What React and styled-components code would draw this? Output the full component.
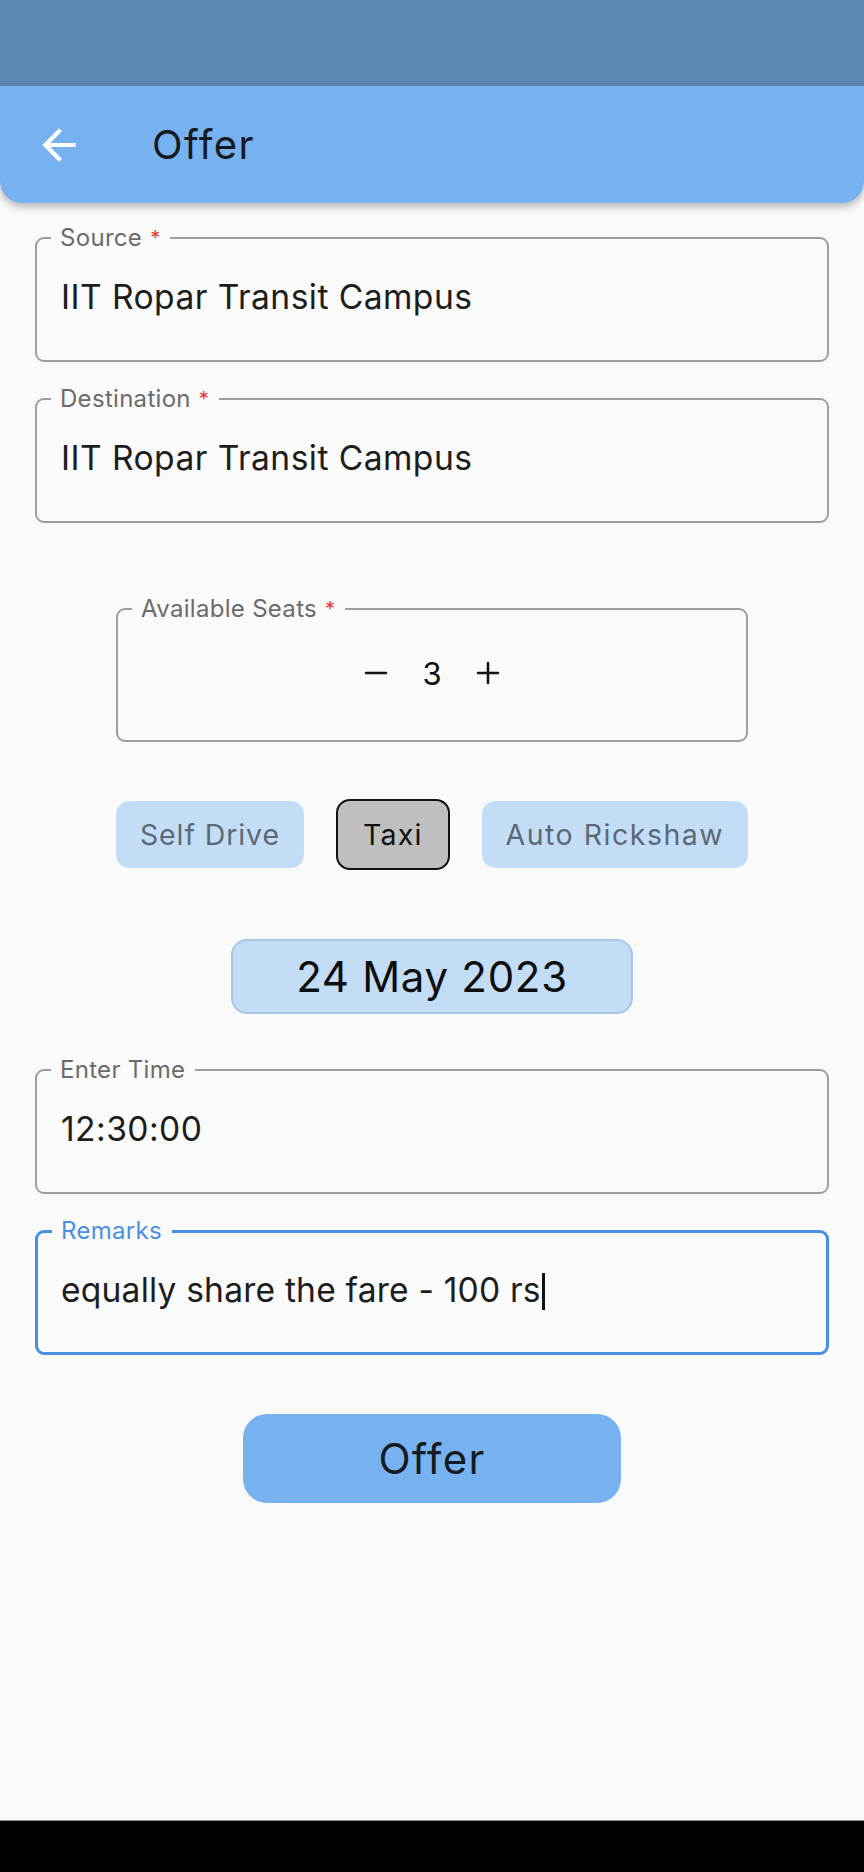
import React from "react";
import styled, { createGlobalStyle } from "styled-components";
import { Minus, Plus } from "lucide-react";

const GlobalStyle = createGlobalStyle`
  html, body {
    margin: 0;
    padding: 0;
    background: #fafafa;
  }
  body {
    font-family: "Inter", "Noto Sans", sans-serif;
    color: #1d1d1d;
  }
  * {
    box-sizing: border-box;
  }
`;

const Screen = styled.div`
  min-height: 1872px;
  display: flex;
  flex-direction: column;
  background: #fafafa;
`;

const StatusBar = styled.div`
  height: 86px;
  background: #5a87b3;
`;

const AppBar = styled.header`
  height: 117px;
  background: #77b2f0;
  border-radius: 0 0 22px 22px;
  box-shadow: 0 4px 8px rgba(0, 0, 0, 0.28);
  display: flex;
  align-items: center;
  padding-left: 34px;
  gap: 68px;
  position: relative;
  z-index: 1;
`;

const BackButton = styled.button`
  width: 50px;
  height: 50px;
  padding: 0;
  border: none;
  background: none;
  display: flex;
  align-items: center;
  justify-content: center;
`;

const Title = styled.h1`
  margin: 0;
  font-size: 40px;
  font-weight: 400;
  letter-spacing: 1.4px;
  color: #161b22;
`;

const Form = styled.main`
  flex: 1;
  display: flex;
  flex-direction: column;
  padding: 0 35px;
`;

const Field = styled.fieldset`
  margin: ${(p) => p.$mt}px ${(p) => (p.$narrow ? 81 : 0)}px 0;
  padding: ${(p) => p.$pt || 27}px ${(p) => (p.$focused ? 23 : 24)}px
    ${(p) => (p.$pb || 43) - (p.$focused ? 1 : 0)}px;
  border: ${(p) => (p.$focused ? "3px solid #4a90e2" : "2px solid #9e9e9e")};
  border-radius: 9px;
  min-width: 0;
`;

const Label = styled.legend`
  font-size: 24px;
  line-height: 24px;
  letter-spacing: 0.3px;
  padding: 0 10px 0 9px;
  margin-left: ${(p) => (p.$focused ? -9 : -10)}px;
  color: ${(p) => (p.$focused ? "#4a90e2" : "#6b6b6b")};
`;

const Required = styled.span`
  color: #e53935;
  font-size: 20px;
  margin-left: 8px;
  vertical-align: top;
`;

const Value = styled.div`
  font-size: 33.6px;
  line-height: 40px;
  letter-spacing: ${(p) => p.$spacing ?? 0.45}px;
  color: #1d1d1d;
  white-space: nowrap;
`;

const Caret = styled.span`
  display: inline-block;
  width: 3px;
  height: 37px;
  background: #111;
  vertical-align: -8px;
  margin-left: 1px;
`;

const Stepper = styled.div`
  display: flex;
  align-items: center;
  justify-content: center;
  gap: 29px;
  height: 40px;
  font-size: 31px;
  color: #111;
`;

const StepButton = styled.button`
  width: 34px;
  height: 34px;
  padding: 0;
  border: none;
  background: none;
  display: flex;
  align-items: center;
  justify-content: center;
  color: #111;
`;

const ChipRow = styled.div`
  margin-top: 57px;
  display: flex;
  justify-content: center;
  align-items: center;
  gap: 31px;
`;

const Chip = styled.button`
  height: ${(p) => (p.$active ? 71 : 69)}px;
  padding: 0 ${(p) => (p.$active ? 25 : 24)}px;
  border-radius: 14px;
  border: ${(p) => (p.$active ? "2px solid #111" : "1.5px solid #ffffff")};
  background: ${(p) => (p.$active ? "#bfbfbf" : "#c3ddf7")};
  color: ${(p) => (p.$active ? "#111" : "#5d6875")};
  font-family: inherit;
  font-size: 28.5px;
  letter-spacing: ${(p) => p.$spacing ?? 1.2}px;
`;

const DateBox = styled.div`
  margin: 69px auto 0;
  width: 402px;
  height: 75px;
  border-radius: 16px;
  border: 2px solid #a9c6e2;
  background: #c3ddf7;
  display: flex;
  align-items: center;
  justify-content: center;
  font-size: 42px;
  letter-spacing: 0.7px;
  color: #0d0d0d;
`;

const SubmitButton = styled.button`
  margin: 59px auto 0;
  width: 378px;
  height: 89px;
  border: none;
  border-radius: 24px;
  background: #77b2f0;
  font-family: inherit;
  font-size: 42px;
  letter-spacing: 1.3px;
  color: #161b22;
`;

const NavBar = styled.div`
  height: 52px;
  background: #000;
  border-top: 1px solid #8a8a8a;
`;

function ArrowBack() {
  return (
    <svg width="50" height="50" viewBox="0 0 24 24" fill="#fff">
      <path d="M20 11H7.83l5.59-5.59L12 4l-8 8 8 8 1.41-1.41L7.83 13H20v-2z" />
    </svg>
  );
}

export default function App() {
  return (
    <>
      <GlobalStyle />
      <Screen>
        <StatusBar />
        <AppBar>
          <BackButton aria-label="Back">
            <ArrowBack />
          </BackButton>
          <Title>Offer</Title>
        </AppBar>

        <Form>
          <Field $mt={23}>
            <Label>
              Source<Required>*</Required>
            </Label>
            <Value>IIT Ropar Transit Campus</Value>
          </Field>

          <Field $mt={25}>
            <Label>
              Destination<Required>*</Required>
            </Label>
            <Value>IIT Ropar Transit Campus</Value>
          </Field>

          <Field $mt={74} $narrow $pt={32} $pb={47}>
            <Label>
              Available Seats<Required>*</Required>
            </Label>
            <Stepper>
              <StepButton aria-label="Fewer seats">
                <Minus size={34} strokeWidth={1.8} />
              </StepButton>
              <span>3</span>
              <StepButton aria-label="More seats">
                <Plus size={34} strokeWidth={1.8} />
              </StepButton>
            </Stepper>
          </Field>

          <ChipRow>
            <Chip $spacing={0.9}>Self Drive</Chip>
            <Chip $active>Taxi</Chip>
            <Chip $spacing={1.5}>Auto Rickshaw</Chip>
          </ChipRow>

          <DateBox>24 May 2023</DateBox>

          <Field $mt={44}>
            <Label>Enter Time</Label>
            <Value>12:30:00</Value>
          </Field>

          <Field $mt={25} $focused>
            <Label $focused>Remarks</Label>
            <Value $spacing={0.2}>
              equally share the fare - 100 rs
              <Caret />
            </Value>
          </Field>

          <SubmitButton>Offer</SubmitButton>
        </Form>

        <NavBar />
      </Screen>
    </>
  );
}
